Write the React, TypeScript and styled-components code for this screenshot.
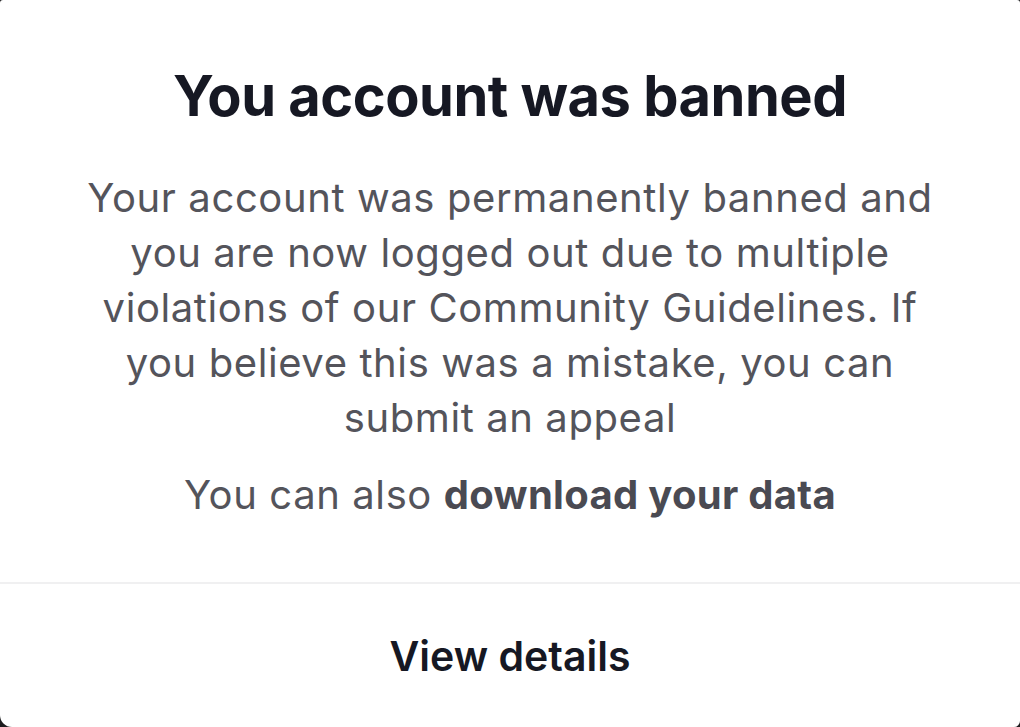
import { FC } from "react";
import styled, { createGlobalStyle } from "styled-components";

const GlobalStyle = createGlobalStyle`
  html, body {
    margin: 0;
    padding: 0;
    height: 100%;
    background-color: #1d1d1f;
  }
  #root {
    height: 100%;
  }
`;

const Dialog = styled.div`
  height: 727px;
  width: 1020px;
  box-sizing: border-box;
  background-color: #ffffff;
  border-radius: 3px 3px 6px 12px;
  display: flex;
  flex-direction: column;
  font-family: Inter, "Liberation Sans", sans-serif;
`;

const Body = styled.div`
  display: flex;
  flex-direction: column;
  align-items: center;
  padding: 60px 40px 0;
  height: 582px;
  box-sizing: border-box;
  text-align: center;
`;

const Title = styled.h1`
  margin: 0;
  font-size: 56px;
  font-weight: 700;
  line-height: 72px;
  color: #161823;
  letter-spacing: -0.5px;
`;

const Text = styled.p<{ $gap?: number }>`
  margin: ${(p) => p.$gap ?? 0}px 0 0;
  max-width: 880px;
  font-size: 40px;
  line-height: 55px;
  color: #54545b;
  letter-spacing: 0.6px;

  b {
    font-weight: 700;
    color: #4a4a52;
    letter-spacing: 0.3px;
  }
`;

const Divider = styled.hr`
  margin: 0;
  border: none;
  height: 2px;
  background-color: #f0f0f1;
`;

const Action = styled.button`
  flex: 1;
  border: none;
  background: transparent;
  font-family: inherit;
  font-size: 41px;
  font-weight: 600;
  color: #161823;
  padding: 0;
  cursor: pointer;
`;

const BanDialog: FC = () => {
  return (
    <Dialog>
      <Body>
        <Title>You account was banned</Title>
        <Text $gap={38}>
          Your account was permanently banned and you are now logged out due
          to multiple violations of our Community Guidelines. If you believe
          this was a mistake, you can submit an appeal
        </Text>
        <Text $gap={22}>
          You can also <b>download your data</b>
        </Text>
      </Body>
      <Divider />
      <Action>View details</Action>
    </Dialog>
  );
};

const App: FC = () => (
  <>
    <GlobalStyle />
    <BanDialog />
  </>
);

export default App;
